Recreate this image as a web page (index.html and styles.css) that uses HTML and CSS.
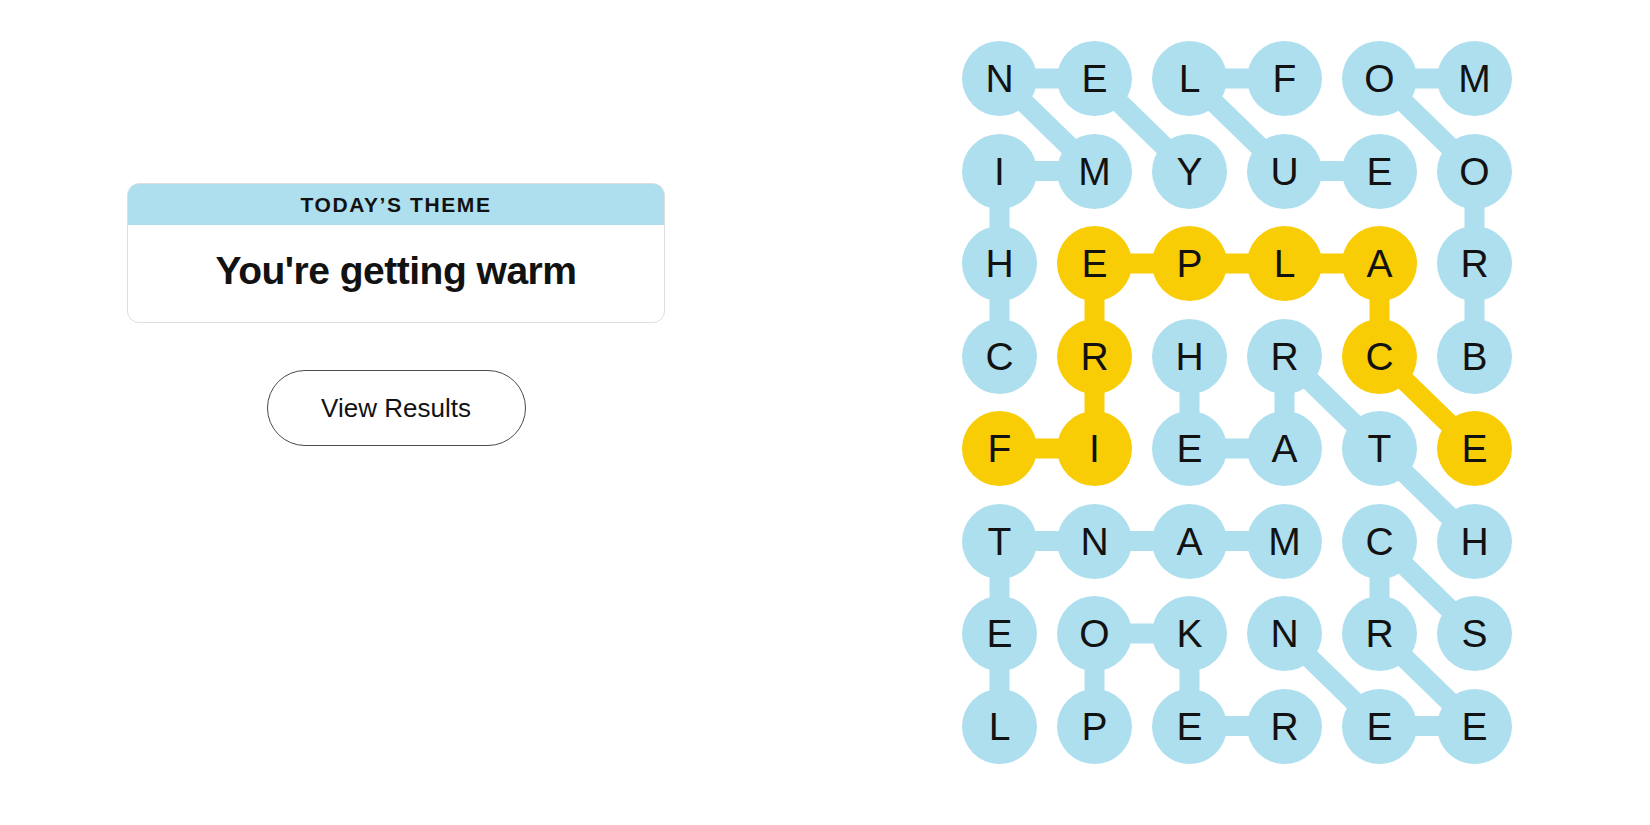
FILE: index.html
```html
<!DOCTYPE html>
<html lang="en">
<head>
<meta charset="utf-8">
<title>Strands</title>
<link rel="stylesheet" href="styles.css">
</head>
<body>
<main class="game">
  <section class="side">
    <div class="theme-card">
      <div class="theme-head">TODAY’S THEME</div>
      <div class="theme-body"><h1 class="theme-title">You're getting warm</h1></div>
    </div>
    <button class="results-btn" type="button">View Results</button>
  </section>

  <section class="board">
    <svg class="links" viewBox="0 0 550 722.5" width="550" height="722.5" aria-hidden="true">
      <g class="found" fill="none" stroke-width="20" stroke-linejoin="round">
        <polyline points="37.5,315 37.5,222.5 37.5,130 132.5,130 37.5,37.5 132.5,37.5 227.5,130"/>
        <polyline points="322.5,37.5 227.5,37.5 322.5,130 417.5,130"/>
        <polyline points="512.5,315 512.5,222.5 512.5,130 417.5,37.5 512.5,37.5"/>
        <polyline points="227.5,315 227.5,407.5 322.5,407.5 322.5,315 417.5,407.5 512.5,500"/>
        <polyline points="322.5,500 227.5,500 132.5,500 37.5,500 37.5,592.5 37.5,685"/>
        <polyline points="132.5,685 132.5,592.5 227.5,592.5 227.5,685 322.5,685"/>
        <polyline points="512.5,592.5 417.5,500 417.5,592.5 512.5,685 417.5,685 322.5,592.5"/>
      </g>
      <g class="spangram" fill="none" stroke-width="20" stroke-linejoin="round">
        <polyline points="37.5,407.5 132.5,407.5 132.5,315 132.5,222.5 227.5,222.5 322.5,222.5 417.5,222.5 417.5,315 512.5,407.5"/>
      </g>
    </svg>
    <div class="grid">
      <span class="cell">N</span><span class="cell">E</span><span class="cell">L</span><span class="cell">F</span><span class="cell">O</span><span class="cell">M</span>
      <span class="cell">I</span><span class="cell">M</span><span class="cell">Y</span><span class="cell">U</span><span class="cell">E</span><span class="cell">O</span>
      <span class="cell">H</span><span class="cell span">E</span><span class="cell span">P</span><span class="cell span">L</span><span class="cell span">A</span><span class="cell">R</span>
      <span class="cell">C</span><span class="cell span">R</span><span class="cell">H</span><span class="cell">R</span><span class="cell span">C</span><span class="cell">B</span>
      <span class="cell span">F</span><span class="cell span">I</span><span class="cell">E</span><span class="cell">A</span><span class="cell">T</span><span class="cell span">E</span>
      <span class="cell">T</span><span class="cell">N</span><span class="cell">A</span><span class="cell">M</span><span class="cell">C</span><span class="cell">H</span>
      <span class="cell">E</span><span class="cell">O</span><span class="cell">K</span><span class="cell">N</span><span class="cell">R</span><span class="cell">S</span>
      <span class="cell">L</span><span class="cell">P</span><span class="cell">E</span><span class="cell">R</span><span class="cell">E</span><span class="cell">E</span>
    </div>
  </section>
</main>
</body>
</html>
```

FILE: styles.css
```css
* {
  box-sizing: border-box;
}

html, body {
  margin: 0;
  padding: 0;
  background: #ffffff;
}

body {
  font-family: "Liberation Sans", Arial, sans-serif;
  color: #121212;
  width: 1650px;
  height: 825px;
  overflow: hidden;
}

.game {
  display: grid;
  grid-template-columns: 792px 550px;
  column-gap: 170px;
}

/* left side */
.side {
  padding-top: 183px;
  display: flex;
  flex-direction: column;
  align-items: center;
}

.theme-card {
  width: 538px;
  border: 1px solid #dedede;
  border-radius: 12px;
  overflow: hidden;
  background: #fff;
}

.theme-head {
  height: 41px;
  background: #aedfee;
  display: flex;
  align-items: center;
  justify-content: center;
  font-size: 21px;
  font-weight: 700;
  letter-spacing: 1.6px;
  color: #121212;
  padding-top: 1px;
}

.theme-body {
  height: 97px;
  display: flex;
  align-items: center;
  justify-content: center;
}

.theme-title {
  margin: 0;
  font-size: 39px;
  font-weight: 700;
  letter-spacing: -0.5px;
  color: #121212;
  padding-bottom: 6px;
}

.results-btn {
  margin-top: 47px;
  width: 259px;
  height: 76px;
  border: 1px solid #4a4a4a;
  border-radius: 38px;
  background: #fff;
  font-family: "Liberation Sans", Arial, sans-serif;
  font-size: 26px;
  color: #121212;
  cursor: pointer;
}

/* board */
.board {
  position: relative;
  margin-top: 41px;
  width: 550px;
  height: 722.5px;
}

.links {
  position: absolute;
  left: 0;
  top: 0;
}

.found polyline {
  stroke: #aedfee;
}

.spangram polyline {
  stroke: #f8cd05;
}

.grid {
  position: relative;
  display: grid;
  grid-template-columns: repeat(6, 75px);
  grid-auto-rows: 75px;
  column-gap: 20px;
  row-gap: 17.5px;
}

.cell {
  width: 75px;
  height: 75px;
  border-radius: 50%;
  background: #aedfee;
  display: flex;
  align-items: center;
  justify-content: center;
  font-family: "Liberation Sans", Arial, sans-serif;
  font-size: 39px;
  font-weight: 400;
  color: #121212;
  line-height: 1;
}

.cell.span {
  background: #f8cd05;
}
```
